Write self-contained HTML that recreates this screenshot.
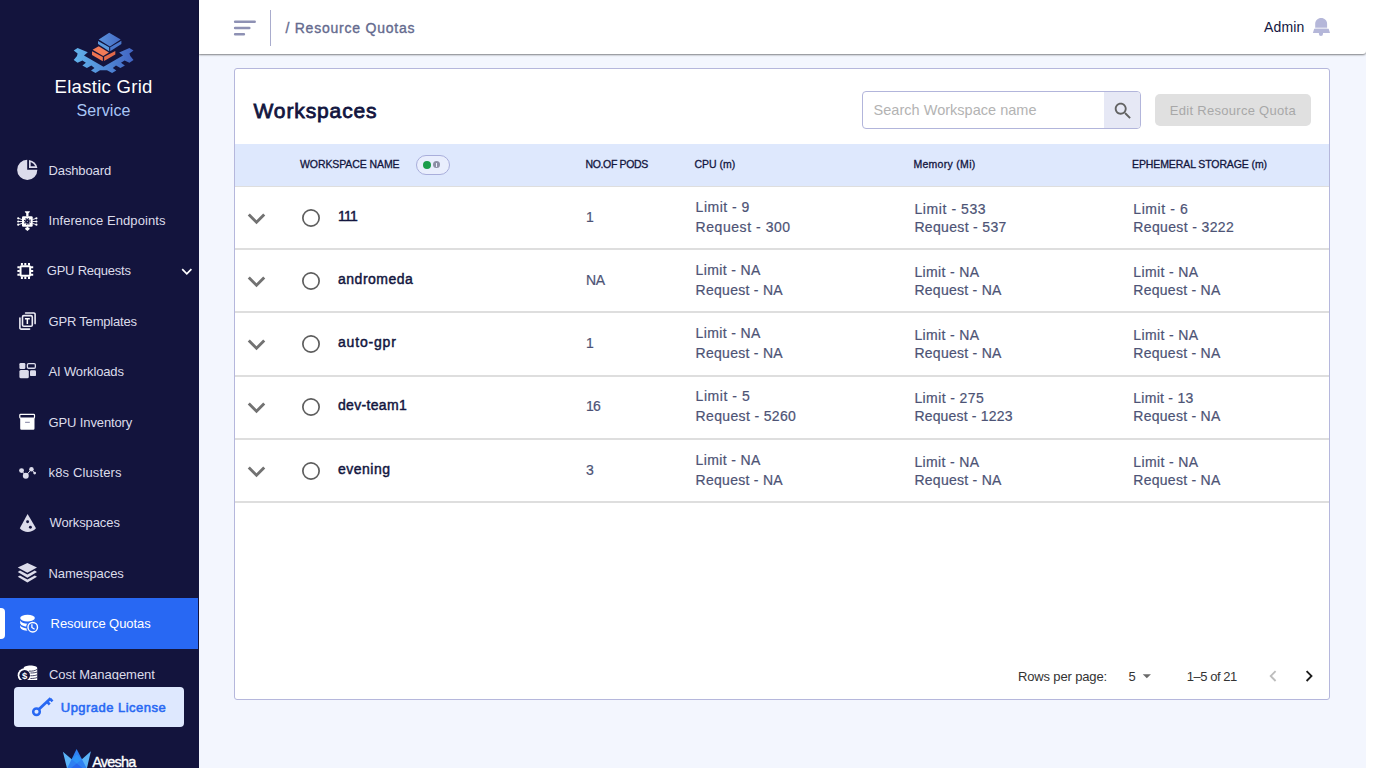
<!DOCTYPE html>
<html lang="en">
<head>
<meta charset="utf-8">
<title>Resource Quotas</title>
<style>
*{box-sizing:border-box;margin:0;padding:0}
html,body{width:1375px;height:782px;background:#fff;overflow:hidden}
body{font-family:"Liberation Sans",sans-serif;position:relative}
#app{position:absolute;left:0;top:0;width:1366px;height:768px;background:#f3f6fe;overflow:hidden}
.abs{position:absolute}
.t{position:absolute;white-space:nowrap;line-height:1}
.m{-webkit-text-stroke:.35px currentColor}
/* sidebar */
#side{position:absolute;left:0;top:0;width:199px;height:768px;background:#13143d;overflow:hidden}
#navlist{position:absolute;left:0;top:0;width:199px;height:680px;overflow:hidden}
.nav{position:absolute;left:48.5px;color:#dcdcea;font-size:13px;white-space:nowrap;line-height:16px}
/* topbar */
#top{position:absolute;left:199px;top:0;width:1167px;height:54px;background:#fff;border-bottom-right-radius:3px;box-shadow:0 1px 2px rgba(0,0,0,.48)}
/* card */
#card{position:absolute;left:234px;top:68px;width:1096px;height:632px;background:#fff;border:1px solid #b5b7dc;border-radius:3px}
#thead{position:absolute;left:235px;top:144px;width:1094px;height:42px;background:#dee8fd}
.th{position:absolute;top:158px;font-size:10.5px;line-height:13px;color:#12153e;white-space:nowrap;-webkit-text-stroke:.3px #12153e}
.rowline{position:absolute;left:235px;width:1094px;height:2px;background:#dedede}
.cell{position:absolute;font-size:14px;line-height:16px;color:#4d5375;white-space:nowrap;-webkit-text-stroke:.2px #4d5375}
.name{position:absolute;left:338px;font-size:14px;line-height:16px;color:#12153e;white-space:nowrap;-webkit-text-stroke:.45px #12153e}
</style>
</head>
<body>
<div id="app">

<!-- SIDEBAR -->
<div id="side">
  <div id="navlist">
    <div class="nav" style="top:163px;letter-spacing:-0.12px">Dashboard</div>
    <div class="nav" style="top:213px;letter-spacing:0.07px">Inference Endpoints</div>
    <div class="nav" style="top:263px;left:46.8px;letter-spacing:-0.23px">GPU Requests</div>
    <div class="nav" style="top:314px;letter-spacing:-0.19px">GPR Templates</div>
    <div class="nav" style="top:364px;letter-spacing:-0.15px">AI Workloads</div>
    <div class="nav" style="top:415px;letter-spacing:-0.12px">GPU Inventory</div>
    <div class="nav" style="top:465px;letter-spacing:0.14px">k8s Clusters</div>
    <div class="nav" style="top:515px;left:49.5px;letter-spacing:-0.1px">Workspaces</div>
    <div class="nav" style="top:566px;letter-spacing:-0.06px">Namespaces</div>
    <div class="abs" style="left:0;top:598px;width:198px;height:51px;background:#2868f3"></div>
    <div class="abs" style="left:-5px;top:608px;width:10px;height:31px;background:#fff;border-radius:4px"></div>
    <div class="nav" style="top:616px;left:50.6px;color:#fff;letter-spacing:-0.08px">Resource Quotas</div>
    <div class="nav" style="top:667px;left:49px;letter-spacing:-0.02px">Cost Management</div>
<svg class="abs" style="left:0;top:0" width="199" height="680" viewBox="0 0 199 680">
  <!-- Dashboard pie -->
  <g fill="#dcdceb">
    <path d="M27.2 159.75A10.1 10.1 0 1 0 37.35 169.75H27.2Z"/>
    <path d="M29 159.9A10.1 10.1 0 0 1 37.4 167.9H29Z"/>
  </g>
  <path d="M30.7 162A8.7 8.7 0 0 1 35.3 166.3H30.7Z" fill="#13143d"/>

  <!-- Inference endpoints -->
  <g fill="#fff" stroke="none">
    <rect x="22" y="216.3" width="10.7" height="10.4" rx="1.2"/>
    <path d="M24.9 211.2h4.9v.9l-1.3 1.1v3.3h-2.3v-3.3l-1.3-1.1z"/>
    <path d="M26.5 226.5h1.8v1.2h1l.5 1.3-2.4 2-2.4-2 .5-1.3h1z"/>
    <circle cx="18.2" cy="218.3" r="1.1"/><circle cx="18.2" cy="221.5" r="1.1"/><circle cx="18.2" cy="224.7" r="1.1"/>
    <circle cx="36.4" cy="218.3" r="1.1"/><circle cx="36.4" cy="221.5" r="1.1"/><circle cx="36.4" cy="224.7" r="1.1"/>
  </g>
  <g stroke="#fff" stroke-width=".9" fill="none">
    <path d="M18.2 218.3l4 1.3M18.2 221.5h4M18.2 224.7l4-1.3M36.4 218.3l-4 1.3M36.4 221.5h-4M36.4 224.7l-4-1.3"/>
  </g>
  <circle cx="27.4" cy="221.4" r="2.3" fill="#13143d"/>
  <circle cx="27.4" cy="221.4" r="2.9" fill="none" stroke="#13143d" stroke-width="1.2" stroke-dasharray="1.14 1.14"/>
  <circle cx="27.4" cy="221.4" r=".6" fill="#9a9ab5"/>

  <!-- GPU Requests chip -->
  <g fill="none" stroke="#fff">
    <rect x="20.55" y="266.2" width="9.6" height="9.5" rx=".8" stroke-width="2"/>
    <path d="M21.9 263v2.4M25.3 263v2.4M29 263v2.4M21.9 276.5v2.4M25.3 276.5v2.4M29 276.5v2.4M17.4 267.2h2.4M17.4 271h2.4M17.4 274.8h2.4M30.9 267.2h2.3M30.9 271h2.3M30.9 274.8h2.3" stroke-width="2"/>
  </g>
  <!-- chevron for GPU Requests -->
  <path d="M182.2 269.2l4.6 4.6 4.6-4.6" fill="none" stroke="#fff" stroke-width="1.7"/>

  <!-- GPR Templates -->
  <g fill="none" stroke="#ececf4" stroke-width="1.6" stroke-linecap="round">
    <path d="M25.6 313h8.3a1.2 1.2 0 0 1 1.2 1.2v9.4"/>
    <path d="M19.9 318.1v9.8a1.2 1.2 0 0 0 1.2 1.2h8.5"/>
    <rect x="22.5" y="315.6" width="9.8" height="10.7" rx="1.3"/>
  </g>
  <path d="M24.9 318.1h4.9v1.5h-1.7v4.4h-1.5v-4.4h-1.7z" fill="#fff"/>

  <!-- AI Workloads -->
  <g fill="#dcdceb">
    <rect x="19.4" y="363" width="5.9" height="5.9" rx="1.2"/>
    <rect x="19.4" y="370.1" width="9.4" height="8.2" rx="1.5"/>
    <rect x="30" y="370.3" width="6" height="5.8" rx="1.2"/>
  </g>
  <rect x="27.4" y="363.65" width="7.95" height="4.6" rx="1.2" fill="none" stroke="#dcdceb" stroke-width="1.3"/>

  <!-- GPU Inventory -->
  <rect x="19.8" y="414.4" width="14.7" height="3.7" rx=".8" fill="none" stroke="#fff" stroke-width="1.2"/>
  <path d="M20.2 418h14.3v10.5a1.2 1.2 0 0 1-1.2 1.2H21.4a1.2 1.2 0 0 1-1.2-1.2z" fill="#fff"/>
  <path d="M25.1 422.3h4.7" stroke="#7f7f9f" stroke-width="1" fill="none"/>

  <!-- k8s clusters -->
  <path d="M21.55 470.6l4.25 5.2 5.65-6.6 3.2 3.9" stroke="#dcdceb" stroke-width="1" fill="none"/>
  <g fill="#dcdceb">
    <circle cx="21.55" cy="470.6" r="2.45"/>
    <circle cx="25.8" cy="475.8" r="2.95"/>
    <circle cx="31.45" cy="469.2" r="2.25"/>
    <circle cx="34.65" cy="473.1" r="1.4"/>
  </g>

  <!-- Workspaces cone -->
  <path d="M27.6 514 36 528.3C33.6 530.8 30.8 532 27.8 532S22.2 530.8 19.8 528.3z" fill="#dcdceb"/>
  <circle cx="27.6" cy="521.8" r="1.45" fill="#13143d"/>
  <circle cx="30.4" cy="527.25" r="1.45" fill="#13143d"/>

  <!-- Namespaces layers -->
  <g fill="#dcdceb">
    <path d="M27.4 563.1 37 567.4 27.4 572.75 17.75 567.4z"/>
    <path d="M17.75 571.9 20 570.6 27.4 574.6 34.8 570.6 37 571.9 27.4 577.7z"/>
    <path d="M17.75 576.7 20 575.4 27.4 579.4 34.8 575.4 37 576.7 27.4 582.5z"/>
  </g>

  <!-- Resource Quotas db + clock -->
  <g fill="#fff">
    <ellipse cx="27.55" cy="618.1" rx="7.35" ry="3.4"/>
    <path d="M20.2 620.6c1.2 2.2 4 3.1 7.35 3.1s6.15-.9 7.35-3.1v2.9c-1.2 2.2-4 3.1-7.35 3.1s-6.15-.9-7.35-3.1z"/>
    <path d="M20.2 625.2c1.2 2.2 4 3.1 7.35 3.1s6.15-.9 7.35-3.1v2.4c-1.2 2.2-4 3.1-7.35 3.1s-6.15-.9-7.35-3.1z"/>
  </g>
  <circle cx="32.75" cy="627.2" r="6.5" fill="#2868f3"/>
  <circle cx="32.75" cy="627.2" r="4.75" fill="none" stroke="#fff" stroke-width="1.4"/>
  <path d="M31.9 624.2v3.3l2.7 1.8" fill="none" stroke="#fff" stroke-width="1.3"/>

  <!-- Cost management -->
  <g fill="#fff">
    <circle cx="24.7" cy="675.2" r="7"/>
    <path d="M23.7 668c0-1.4 3-2.45 6.8-2.45s6.7 1.05 6.7 2.45v14H23.7z"/>
  </g>
  <g fill="none" stroke="#13143d" stroke-width=".8">
    <path d="M29 671.1c3.2.3 6.4-.4 8.2-1.8M30.4 673c2.7 0 5.2-.3 6.8-1M30.4 675.8c2.7 0 5.2-.3 6.8-1M30.4 678.5c2.7 0 5.2-.3 6.8-1"/>
  </g>
  <circle cx="24.7" cy="675.2" r="5.3" fill="#13143d"/>
  <text x="24.7" y="678.7" font-family="Liberation Sans, sans-serif" font-size="9.5" font-weight="bold" fill="#fff" text-anchor="middle">$</text>
</svg>

  </div>
  <div class="abs" style="left:14px;top:687px;width:170px;height:40px;background:#dee8fe;border-radius:4px"></div>
  <div class="t" style="left:60.8px;top:701px;font-size:13px;-webkit-text-stroke:.55px #2868f3;color:#2868f3;letter-spacing:0.47px">Upgrade License</div>
  <div class="t m" style="left:92.2px;top:755px;font-size:14.5px;color:#fff;letter-spacing:-0.82px">Avesha</div>
  <div class="t" style="left:54.5px;top:78px;font-size:18.5px;color:#fff;letter-spacing:0.3px">Elastic Grid</div>
  <div class="t" style="left:76.6px;top:102.5px;font-size:16px;color:#a9c6f6;letter-spacing:0.08px">Service</div>
<!-- logo -->
<svg class="abs" style="left:0;top:0" width="199" height="130" viewBox="0 0 199 130">
  <defs>
    <linearGradient id="gb" x1="73" y1="0" x2="134" y2="0" gradientUnits="userSpaceOnUse"><stop offset="0" stop-color="#62b4ec"/><stop offset="1" stop-color="#4163c2"/></linearGradient>
    <linearGradient id="gt" x1="98" y1="0" x2="122" y2="0" gradientUnits="userSpaceOnUse"><stop offset="0" stop-color="#5a93dc"/><stop offset="1" stop-color="#4469c4"/></linearGradient>
  </defs>
  <path fill="url(#gb)" d="M73.7 50.4 77.6 48.1 87.8 52.3 84 55.5 103.5 66.7 123 55.5 119.2 52.6 129.4 48.1 133.5 50.4 129.4 53.6 130.3 56.1 133.5 60 129.4 62.8 124.6 60.6 121 62.8 124.9 65.4 120.4 68 116 65.4 112.8 68 116.3 70.5 112.1 73.1 107 70.2 100 70.2 95.5 73.1 91 70.5 94.5 68 91.3 65.4 86.9 68 82.4 65.4 85.9 62.8 82.4 60.6 77.6 62.8 73.7 60 77 56.1 77.6 53.6z"/>
  <path fill="#f27b58" d="M92.6 49.7 98.7 46.2 108.9 52.6 103.2 56.1z"/>
  <path fill="#ee7351" d="M92 51.3 102.8 57.1V61.2L92 54.9z"/>
  <path fill="#e2694a" d="M104.1 56.8 115.3 51V54.5L104.1 60.9z"/>
  <path fill="url(#gt)" d="M109.2 32.8 120.7 39.5 109.9 46.5 98.7 39.5z"/>
  <path fill="#5b9ade" d="M98 41.1 109.2 47.2V51.3L98 44z"/>
  <path fill="#4a77cc" d="M110.2 47.2 121.4 40.8V44L110.2 51.3z"/>
</svg>
<!-- key -->
<svg class="abs" style="left:30px;top:694px" width="26" height="26" viewBox="30 694 26 26">
  <g fill="none" stroke="#2868f3">
    <circle cx="36.5" cy="711.7" r="3.3" stroke-width="2.5"/>
    <path d="M39.2 709 50.7 698.2" stroke-width="2.8"/>
    <path d="M47.2 701.8l2.5 2.7M50.2 698.9l2.3 2.5" stroke-width="2.6"/>
  </g>
</svg>
<!-- avesha crown -->
<svg class="abs" style="left:60px;top:746px" width="34" height="22" viewBox="60 746 34 22">
  <path fill="#5bb4f8" d="M62.9 751.8 71.7 759.2 83 768H66.9z"/>
  <path fill="#5bb4f8" d="M90.9 751.2 81.9 759.2 70.6 768H87z"/>
  <path fill="#2f80f1" d="M76.6 749 86.5 768H67.3z"/>
  <path fill="#2e92f7" d="M71.7 759.2 76.8 763.6 81.9 759.2 76.7 754.5z"/>
  <path fill="#2a68ec" d="M76.8 763.4 82.6 768H71z"/>
</svg>

</div>

<!-- TOPBAR -->
<div id="top"></div>
<svg class="abs" style="left:230px;top:16px" width="30" height="24" viewBox="230 16 30 24"><path d="M235.1 21.8h19.6M235.1 28h14.2M235.1 34.2h8.8" stroke="#8e91b4" stroke-width="2.5" stroke-linecap="round" fill="none"/></svg>
<div class="abs" style="left:270px;top:10px;width:1px;height:36px;background:#a9accd"></div>
<div class="t m" style="left:285.4px;top:21px;font-size:14px;color:#646a8e;letter-spacing:0.78px">/ Resource Quotas</div>
<div class="t" style="left:1264px;top:20px;font-size:14px;color:#12153e;letter-spacing:0.14px">Admin</div>

<!-- CARD -->
<div id="card"></div>
<div class="t" style="left:253.5px;top:100px;font-size:21px;-webkit-text-stroke:.8px #12153e;color:#12153e;letter-spacing:0.88px">Workspaces</div>
<div class="abs" style="left:862px;top:91px;width:279px;height:38px;border:1px solid #b2b5db;border-radius:4px;background:#fff;overflow:hidden">
  <div class="abs" style="left:241px;top:0;width:37px;height:36px;background:#e6e8f5"></div>
</div>
<div class="t" style="left:873.6px;top:103px;font-size:14.5px;color:#b3b3b3;letter-spacing:0.02px">Search Workspace name</div>
<div class="abs" style="left:1155px;top:94px;width:156px;height:32px;border-radius:5px;background:#e0e0e0"></div>
<div class="t" style="left:1169.8px;top:104px;font-size:13px;color:#a8a8a8;letter-spacing:0.29px">Edit Resource Quota</div>

<div id="thead"></div>
<div class="th" style="left:300px;letter-spacing:-0.09px">WORKSPACE NAME</div>
<div class="th" style="left:585.4px;letter-spacing:-0.33px">NO.OF PODS</div>
<div class="th" style="left:694.5px;letter-spacing:-0px">CPU (m)</div>
<div class="th" style="left:913.4px;letter-spacing:0.3px">Memory (Mi)</div>
<div class="th" style="left:1132px;letter-spacing:-0.1px">EPHEMERAL STORAGE (m)</div>
<div class="abs" style="left:416px;top:155px;width:34px;height:20px;border:1px solid #a9aedb;border-radius:10px;background:#e9eefd"></div>
<div class="abs" style="left:423px;top:161px;width:8px;height:8px;border-radius:50%;background:#1b9e4b"></div>
<div class="abs" style="left:433px;top:161px;width:7px;height:7px;border-radius:50%;background:#8c8fa5"></div>
<div class="abs" style="left:436px;top:162.5px;width:1px;height:4px;background:#e9eefd"></div>

<div class="abs" style="left:235px;top:186px;width:1094px;height:1px;background:#dedede"></div>
<div class="rowline" style="top:248px"></div>
<div class="rowline" style="top:311px"></div>
<div class="rowline" style="top:375px"></div>
<div class="rowline" style="top:438px"></div>
<div class="rowline" style="top:501px"></div>

<svg class="abs" style="left:239.1px;top:200.6px" width="35" height="35" viewBox="0 0 24 24"><path fill="#727272" d="M16.59 8.59 12 13.17 7.41 8.59 6 10l6 6 6-6z"/></svg>
<svg class="abs" style="left:299.8px;top:206.6px" width="22" height="22" viewBox="0 0 22 22"><circle cx="11" cy="11" r="8.15" fill="none" stroke="#5e5e5e" stroke-width="1.7"/></svg>
<div class="name" style="top:208px;letter-spacing:-0.76px">111</div>
<div class="cell" style="left:586px;top:209px">1</div>
<div class="cell" style="left:695.6px;top:199px;letter-spacing:0.5px">Limit - 9</div>
<div class="cell" style="left:695.6px;top:219px;letter-spacing:0.55px">Request - 300</div>
<div class="cell" style="left:914.4px;top:201px;letter-spacing:0.59px">Limit - 533</div>
<div class="cell" style="left:914.4px;top:219px;letter-spacing:0.33px">Request - 537</div>
<div class="cell" style="left:1133.3px;top:201px;letter-spacing:0.58px">Limit - 6</div>
<div class="cell" style="left:1133.3px;top:219px;letter-spacing:0.36px">Request - 3222</div>
<svg class="abs" style="left:239.1px;top:263.6px" width="35" height="35" viewBox="0 0 24 24"><path fill="#727272" d="M16.59 8.59 12 13.17 7.41 8.59 6 10l6 6 6-6z"/></svg>
<svg class="abs" style="left:299.8px;top:269.6px" width="22" height="22" viewBox="0 0 22 22"><circle cx="11" cy="11" r="8.15" fill="none" stroke="#5e5e5e" stroke-width="1.7"/></svg>
<div class="name" style="top:271px;letter-spacing:0.51px">andromeda</div>
<div class="cell" style="left:586px;top:272px;letter-spacing:-0.48px">NA</div>
<div class="cell" style="left:695.6px;top:262px;letter-spacing:0.36px">Limit - NA</div>
<div class="cell" style="left:695.6px;top:282px;letter-spacing:0.27px">Request - NA</div>
<div class="cell" style="left:914.4px;top:264px;letter-spacing:0.36px">Limit - NA</div>
<div class="cell" style="left:914.4px;top:282px;letter-spacing:0.27px">Request - NA</div>
<div class="cell" style="left:1133.3px;top:264px;letter-spacing:0.36px">Limit - NA</div>
<div class="cell" style="left:1133.3px;top:282px;letter-spacing:0.27px">Request - NA</div>
<svg class="abs" style="left:239.1px;top:326.6px" width="35" height="35" viewBox="0 0 24 24"><path fill="#727272" d="M16.59 8.59 12 13.17 7.41 8.59 6 10l6 6 6-6z"/></svg>
<svg class="abs" style="left:299.8px;top:332.6px" width="22" height="22" viewBox="0 0 22 22"><circle cx="11" cy="11" r="8.15" fill="none" stroke="#5e5e5e" stroke-width="1.7"/></svg>
<div class="name" style="top:334px;letter-spacing:0.81px">auto-gpr</div>
<div class="cell" style="left:586px;top:335px">1</div>
<div class="cell" style="left:695.6px;top:325px;letter-spacing:0.36px">Limit - NA</div>
<div class="cell" style="left:695.6px;top:345px;letter-spacing:0.27px">Request - NA</div>
<div class="cell" style="left:914.4px;top:327px;letter-spacing:0.36px">Limit - NA</div>
<div class="cell" style="left:914.4px;top:345px;letter-spacing:0.27px">Request - NA</div>
<div class="cell" style="left:1133.3px;top:327px;letter-spacing:0.36px">Limit - NA</div>
<div class="cell" style="left:1133.3px;top:345px;letter-spacing:0.27px">Request - NA</div>
<svg class="abs" style="left:239.1px;top:389.6px" width="35" height="35" viewBox="0 0 24 24"><path fill="#727272" d="M16.59 8.59 12 13.17 7.41 8.59 6 10l6 6 6-6z"/></svg>
<svg class="abs" style="left:299.8px;top:395.6px" width="22" height="22" viewBox="0 0 22 22"><circle cx="11" cy="11" r="8.15" fill="none" stroke="#5e5e5e" stroke-width="1.7"/></svg>
<div class="name" style="top:397px;letter-spacing:0.32px">dev-team1</div>
<div class="cell" style="left:586px;top:398px;letter-spacing:-0.74px">16</div>
<div class="cell" style="left:695.6px;top:388px;letter-spacing:0.54px">Limit - 5</div>
<div class="cell" style="left:695.6px;top:408px;letter-spacing:0.35px">Request - 5260</div>
<div class="cell" style="left:914.4px;top:390px;letter-spacing:0.4px">Limit - 275</div>
<div class="cell" style="left:914.4px;top:408px;letter-spacing:0.18px">Request - 1223</div>
<div class="cell" style="left:1133.3px;top:390px;letter-spacing:0.27px">Limit - 13</div>
<div class="cell" style="left:1133.3px;top:408px;letter-spacing:0.27px">Request - NA</div>
<svg class="abs" style="left:239.1px;top:453.6px" width="35" height="35" viewBox="0 0 24 24"><path fill="#727272" d="M16.59 8.59 12 13.17 7.41 8.59 6 10l6 6 6-6z"/></svg>
<svg class="abs" style="left:299.8px;top:459.6px" width="22" height="22" viewBox="0 0 22 22"><circle cx="11" cy="11" r="8.15" fill="none" stroke="#5e5e5e" stroke-width="1.7"/></svg>
<div class="name" style="top:461px;letter-spacing:0.49px">evening</div>
<div class="cell" style="left:586px;top:462px">3</div>
<div class="cell" style="left:695.6px;top:452px;letter-spacing:0.36px">Limit - NA</div>
<div class="cell" style="left:695.6px;top:472px;letter-spacing:0.27px">Request - NA</div>
<div class="cell" style="left:914.4px;top:454px;letter-spacing:0.36px">Limit - NA</div>
<div class="cell" style="left:914.4px;top:472px;letter-spacing:0.27px">Request - NA</div>
<div class="cell" style="left:1133.3px;top:454px;letter-spacing:0.36px">Limit - NA</div>
<div class="cell" style="left:1133.3px;top:472px;letter-spacing:0.27px">Request - NA</div>


<!-- pagination -->
<div class="t" style="left:1018px;top:670px;font-size:13px;color:#333;letter-spacing:-0.15px">Rows per page:</div>
<div class="t" style="left:1128.4px;top:670px;font-size:13px;color:#333">5</div>
<div class="t" style="left:1186.7px;top:670px;font-size:13px;color:#333;letter-spacing:-0.45px">1–5 of 21</div>
<!-- bell -->
<svg class="abs" style="left:1310px;top:16px" width="22" height="22" viewBox="1310 16 22 22">
  <path fill="#b5b7d9" d="M1315.2 27.8v-4c0-3.4 2.6-5.85 5.95-5.85s5.95 2.45 5.95 5.85v4z"/>
  <path fill="#b5b7d9" d="M1314.2 28.8h14.5l1.3 4.1h-17.1z"/>
  <path fill="#b5b7d9" d="M1318.9 32.8h4.1v1.2a2.05 2.05 0 0 1-4.1 0z"/>
  <path fill="#dcddee" d="M1315.2 27.8h11.9v1h-11.9z"/>
</svg>
<!-- search icon -->
<svg class="abs" style="left:1111.8px;top:100px" width="22" height="22" viewBox="0 0 24 24"><path fill="#626262" d="M15.5 14h-.790l-.280-.270C15.41 12.59 16 11.11 16 9.5 16 5.91 13.09 3 9.5 3S3 5.91 3 9.5 5.91 16 9.5 16c1.61 0 3.09-.590 4.23-1.57l.270.28v.790l5 4.99L20.49 19l-4.99-5zm-6 0C7.01 14 5 11.99 5 9.5S7.01 5 9.5 5 14 7.01 14 9.5 11.99 14 9.5 14z"/></svg>
<!-- pagination icons -->
<svg class="abs" style="left:1136.9px;top:665.9px" width="19.7" height="19.7" viewBox="0 0 24 24"><path fill="#6a6a6a" d="M7 10l5 5 5-5z"/></svg>
<svg class="abs" style="left:1261.9px;top:664.65px" width="22.2" height="22.2" viewBox="0 0 24 24"><path fill="#bdbdbd" d="M15.41 16.59 10.83 12l4.58-4.59L14 6l-6 6 6 6z"/></svg>
<svg class="abs" style="left:1298px;top:664.65px" width="22.2" height="22.2" viewBox="0 0 24 24"><path fill="#1c1c1c" d="M8.59 16.59 13.17 12 8.59 7.41 10 6l6 6-6 6z"/></svg>


</div>
</body>
</html>
